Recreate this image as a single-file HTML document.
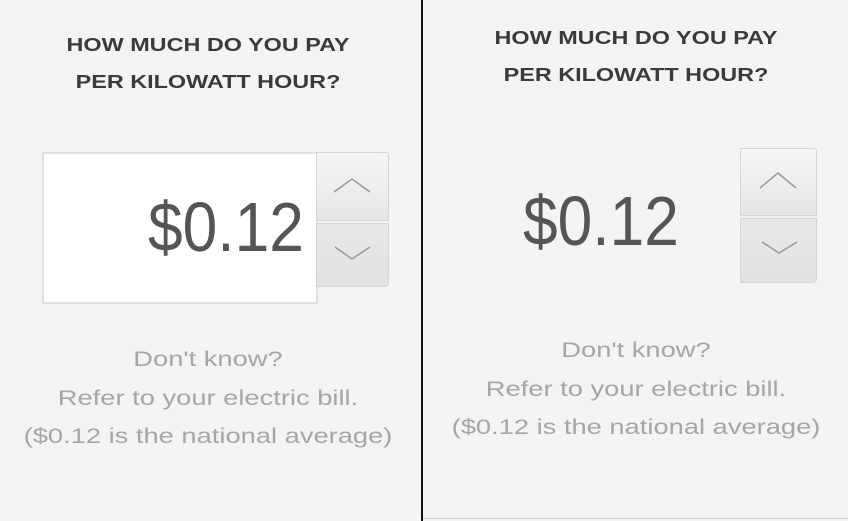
<!DOCTYPE html>
<html><head><style>
body{margin:0;width:848px;height:521px;background:#f4f4f4;position:relative;overflow:hidden;font-family:"Liberation Sans",sans-serif}
.div{position:absolute;left:421px;top:0;width:2px;height:521px;background:#111}
.bot{position:absolute;left:423px;top:518px;width:425px;height:1px;background:#ccc}
.h{position:absolute;width:416px;text-align:center;font-size:18px;font-weight:bold;color:#3a3a3a;line-height:37px;transform:scaleX(1.3);transform-origin:center}
.p{position:absolute;font-size:70px;color:#555;line-height:1;transform:scaleX(0.89);transform-origin:left top}
.t{position:absolute;width:416px;text-align:center;font-size:21px;color:#a6a6a6;line-height:38.5px;transform:scaleX(1.3);transform-origin:center}
.box{position:absolute;left:42px;top:152px;width:272px;height:148px;background:#fff;border:2px solid #e2e2e2}
.btn{position:absolute;background:linear-gradient(#f6f6f6,#e6e6e6);border:1px solid #d6d6d6;box-sizing:border-box}
svg{position:absolute}
</style></head><body>
<div class="div"></div><div class="bot"></div>
<div class="h" style="left:0;top:27px">HOW MUCH DO YOU PAY<br>PER KILOWATT HOUR?</div>
<div class="h" style="left:428px;top:20px">HOW MUCH DO YOU PAY<br>PER KILOWATT HOUR?</div>
<div class="box"></div>
<div class="btn" style="left:316px;top:152px;width:73px;height:69px;border-radius:0 3px 0 0"></div>
<div class="btn" style="left:316px;top:223px;width:73px;height:64px;border-radius:0 0 4px 0;background:linear-gradient(#e9e9e9,#e2e2e2)"></div>
<div class="btn" style="left:740px;top:148px;width:77px;height:68px;border-radius:0 3px 0 0"></div>
<div class="btn" style="left:740px;top:218px;width:77px;height:65px;border-radius:0 0 4px 0;background:linear-gradient(#e9e9e9,#e2e2e2)"></div>
<svg width="848" height="521" style="left:0;top:0"><g fill="none" stroke="#999" stroke-width="1.5">
<path d="M334 192 L352 179 L370 192"/><path d="M335 247 L352 259 L370 247"/>
<path d="M760 188 L778 173 L796 188"/><path d="M762 242 L779 253 L797 242"/></g></svg>
<div class="p" style="left:148px;top:192px">$0.12</div>
<div class="p" style="left:523px;top:186px">$0.12</div>
<div class="t" style="left:0;top:341px">Don't know?<br>Refer to your electric bill.<br>($0.12 is the national average)</div>
<div class="t" style="left:428px;top:332px">Don't know?<br>Refer to your electric bill.<br>($0.12 is the national average)</div>
</body></html>
